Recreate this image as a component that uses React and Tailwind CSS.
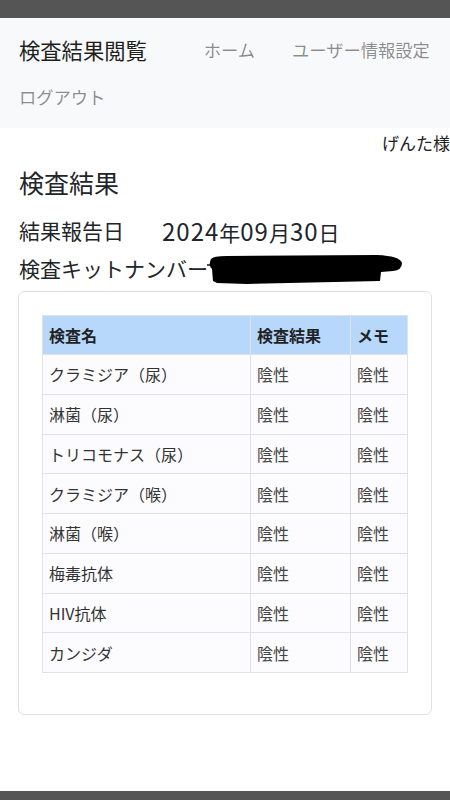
import React from 'react';

const rows = [
  'クラミジア（尿）',
  '淋菌（尿）',
  'トリコモナス（尿）',
  'クラミジア（喉）',
  '淋菌（喉）',
  '梅毒抗体',
  'HIV抗体',
  'カンジダ',
];

// black marker scribble hiding the kit number
const Redaction = () => (
  <svg width="196" height="31" viewBox="0 0 196 31" className="mt-[3px] -ml-[1px] shrink-0">
    <path d="M-12 10 L6 10" stroke="#111" strokeWidth="1.5" />
    <path
      d="M4 4 Q6 1 20 1 L170 0 Q193 1 195 8 Q195 15 186 16 L174 17 L173 26 L40 29 L10 28 L6 26 L5 14 Q1 10 4 4 Z"
      fill="#000"
    />
  </svg>
);

export default function App() {
  return (
    <div className="min-h-[800px] flex flex-col bg-white text-[#212529] font-['Noto_Sans_CJK_JP',sans-serif]">
      <div className="h-[18px] bg-[#555555]" />

      {/* navbar */}
      <nav className="bg-[#f8f9fa] px-[19px] pb-[16px]">
        <div className="h-[64px] flex items-center">
          <span className="text-[21.3px] leading-[30px] text-[#1f1f1f]">検査結果閲覧</span>
          <a className="ml-[57px] text-[17.25px] leading-[30px] text-black/45">ホーム</a>
          <a className="ml-[37px] text-[17.25px] leading-[30px] text-black/45 whitespace-nowrap">ユーザー情報設定</a>
        </div>
        <div className="h-[30px] flex items-center">
          <a className="text-[17.25px] leading-[30px] text-black/45">ログアウト</a>
        </div>
      </nav>

      <div className="h-[30px] leading-[30px] text-[17px] text-right text-[#222]">げんた様</div>

      <div className="px-[18px] flex-1">
        <h2 className="mt-[6px] h-[36px] leading-[36px] text-[25px] pl-[1px]">検査結果</h2>

        <div className="mt-[15px] h-[32px] flex items-center text-[21px] pl-[1px]">
          <span>結果報告日</span>
          <span className="ml-[38px]">
            <span className="text-[24px] tracking-[1px]">2024</span>年<span className="text-[24px] tracking-[1px]">09</span>月<span className="text-[24px] tracking-[1px]">30</span>日
          </span>
        </div>

        <div className="mt-[5px] h-[32px] flex items-start text-[21px] pl-[1px]">
          <span className="leading-[32px]">検査キットナンバー</span>
          <Redaction />
        </div>

        <div className="mt-[7px] border border-[#dfe1e4] rounded-[6px] p-[23px] pb-[41px]">
          <table className="w-full border-collapse text-[16px] leading-[24px]">
            <thead>
              <tr className="h-[39px] bg-[#b8d8fb] font-bold text-[#1f2326]">
                <th className="border border-[#dfe3e8] text-left px-[6px] w-[208px]">検査名</th>
                <th className="border border-[#dfe3e8] text-left px-[6px] w-[100px]">検査結果</th>
                <th className="border border-[#dfe3e8] text-left px-[6px]">メモ</th>
              </tr>
            </thead>
            <tbody>
              {rows.map(name => (
                <tr key={name} className="h-[39.75px] bg-[#fcfcfe] text-[#333]">
                  <td className="border border-[#dfe3e8] px-[6px]">{name}</td>
                  <td className="border border-[#dfe3e8] px-[6px] text-[#444]">陰性</td>
                  <td className="border border-[#dfe3e8] px-[6px] text-[#444]">陰性</td>
                </tr>
              ))}
            </tbody>
          </table>
        </div>
      </div>

      <div className="h-[9px] bg-[#555555]" />
    </div>
  );
}
